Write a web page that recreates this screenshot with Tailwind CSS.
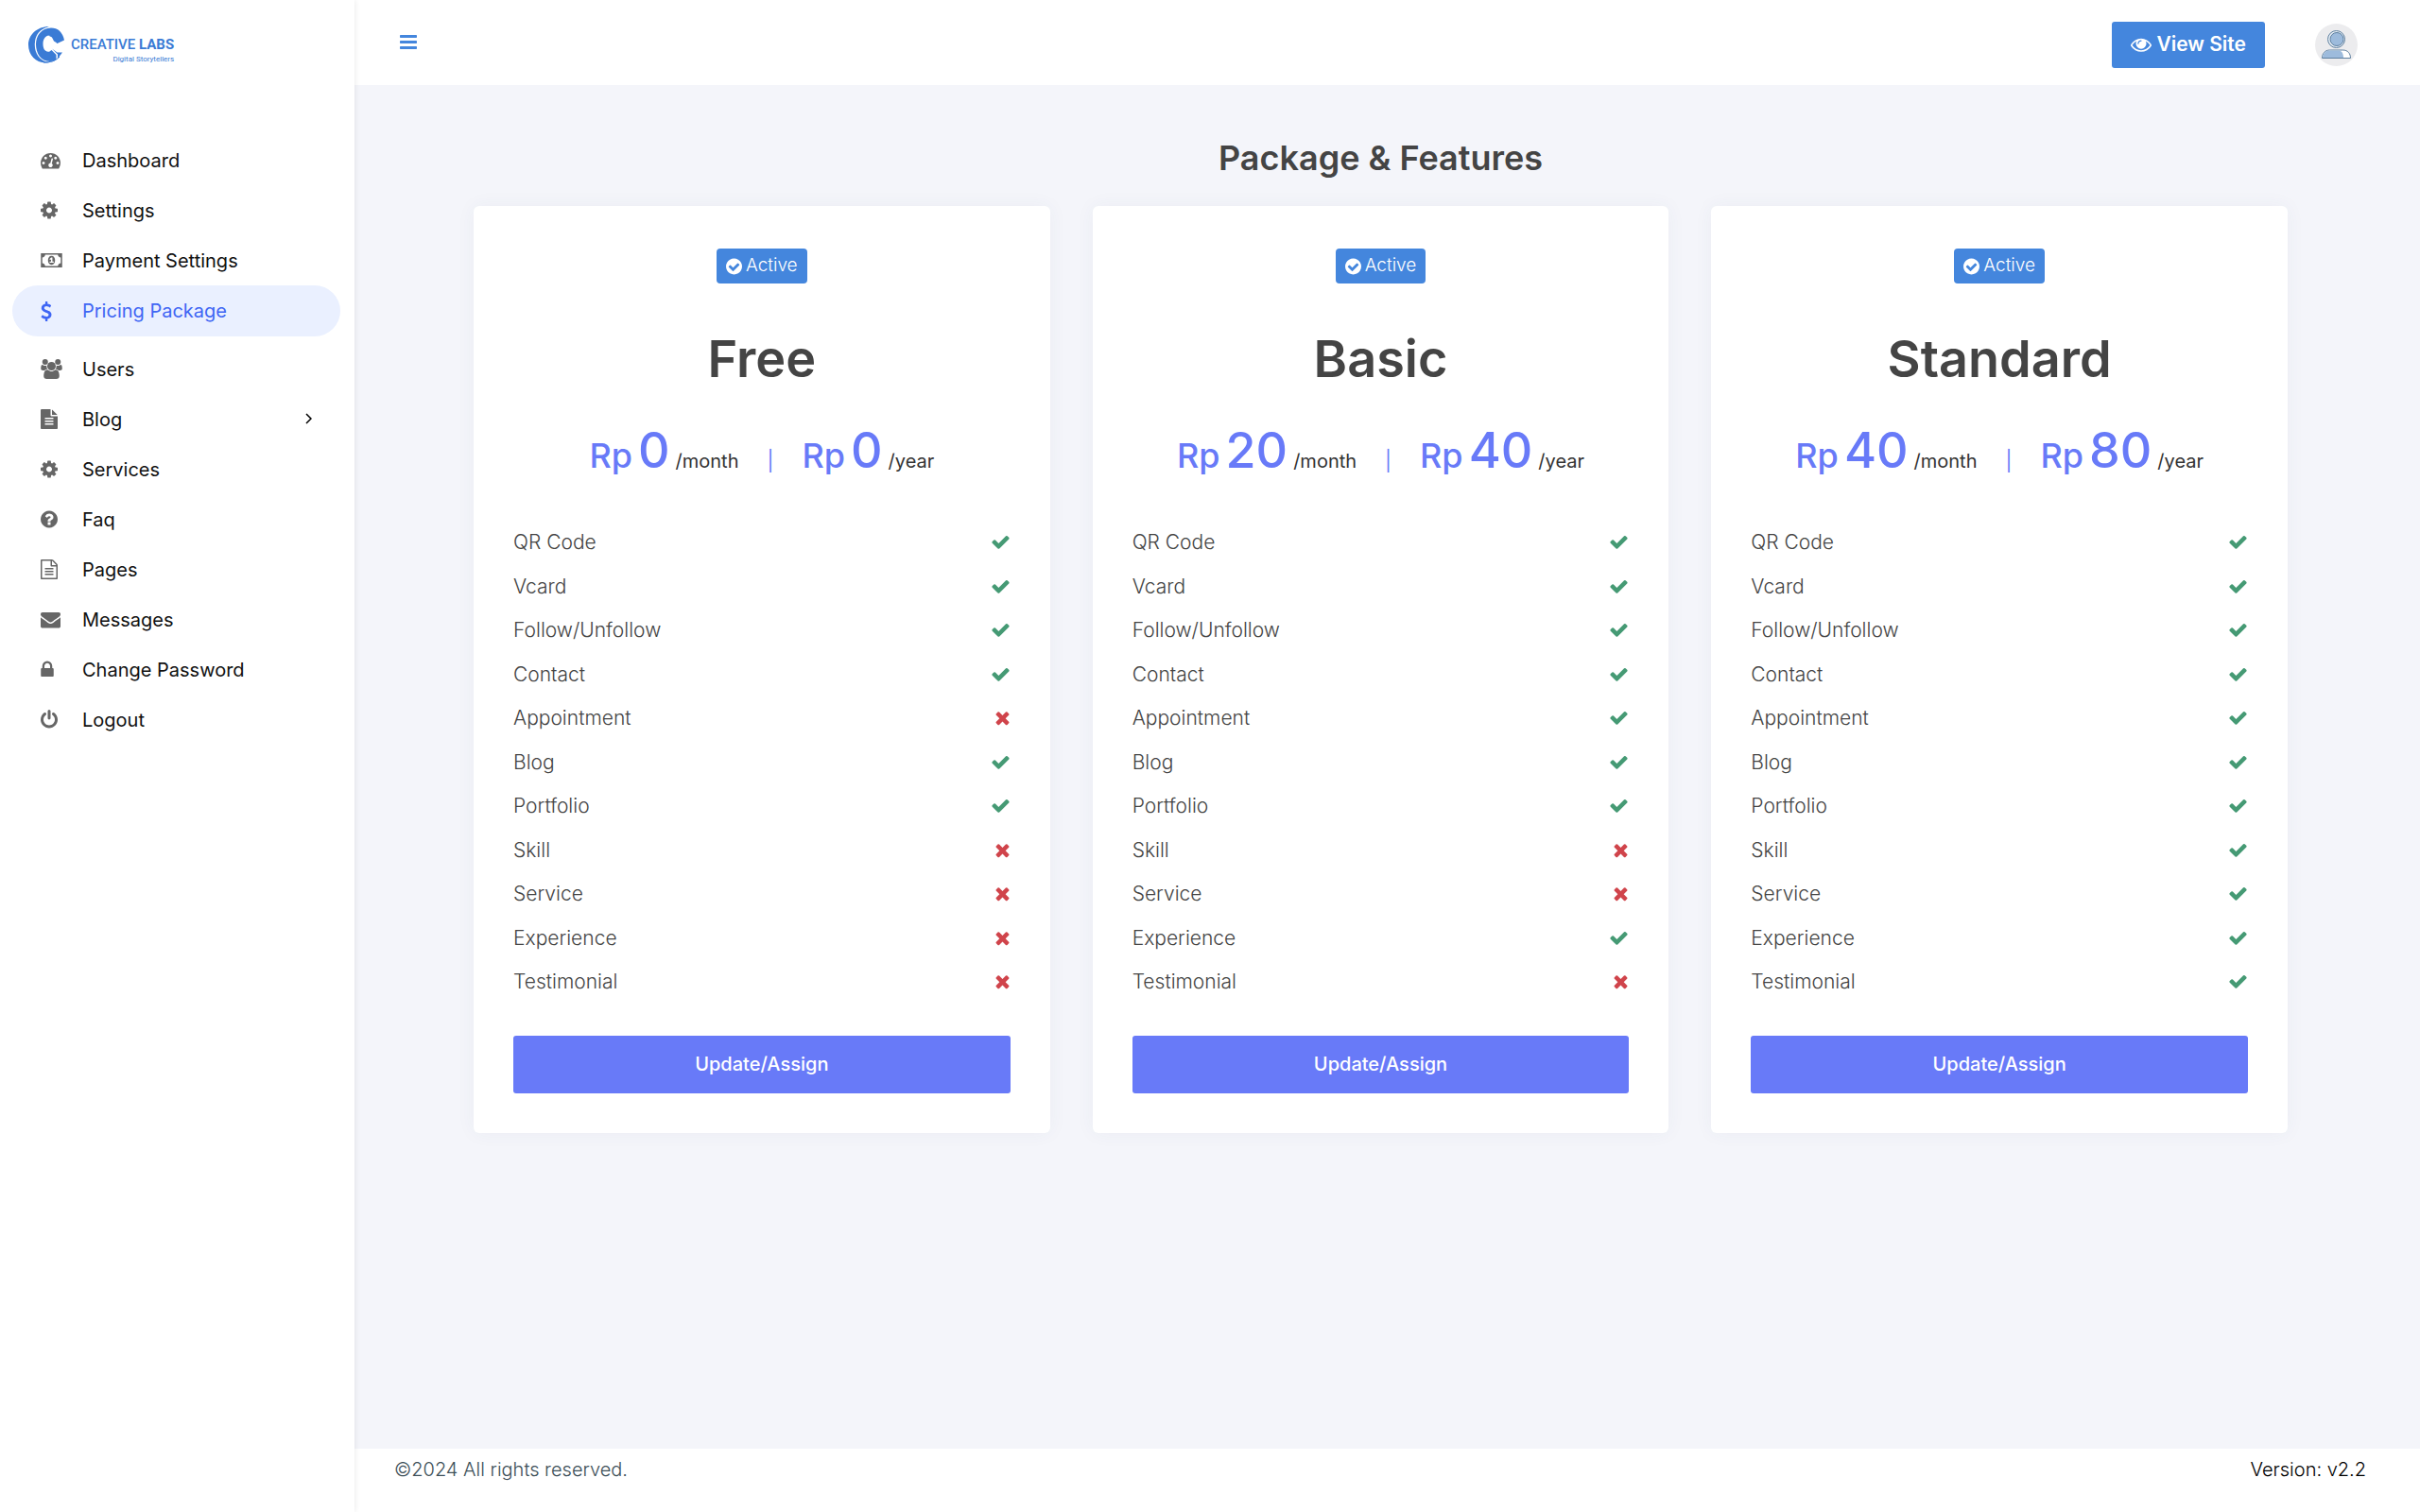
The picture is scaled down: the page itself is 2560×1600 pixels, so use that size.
<!DOCTYPE html>
<html lang="en">

<head>
    <meta charset="UTF-8">
    <meta name="viewport" content="width=device-width, initial-scale=1.0">
    <script src="https://cdn.jsdelivr.net/npm/@tailwindcss/browser@4"></script>
    <title>Package &amp; Features</title>
</head>

<body class="bg-[#f4f5fa] font-['Inter','Open_Sans',sans-serif] text-[21px] leading-normal text-[#444]">
    <!-- Icons -->
    <svg class="hidden" xmlns="http://www.w3.org/2000/svg">
        <symbol id="i-dashboard" viewBox="0 0 1792 1792"><path d="M384 1152q0-53-37.5-90.5t-90.5-37.5-90.5 37.5-37.5 90.5 37.5 90.5 90.5 37.5 90.5-37.5 37.5-90.5zm192-448q0-53-37.5-90.5t-90.5-37.5-90.5 37.5-37.5 90.5 37.5 90.5 90.5 37.5 90.5-37.5 37.5-90.5zm428 481l101-382q6-26-7.5-48.5t-38.5-29.5-48 6.5-30 39.5l-101 382q-60 5-107 43.5t-63 98.5q-20 77 20 146t117 89 146-20 89-117q16-60-6-117t-72-91zm660-33q0-53-37.5-90.5t-90.5-37.5-90.5 37.5-37.5 90.5 37.5 90.5 90.5 37.5 90.5-37.5 37.5-90.5zm-640-640q0-53-37.5-90.5t-90.5-37.5-90.5 37.5-37.5 90.5 37.5 90.5 90.5 37.5 90.5-37.5 37.5-90.5zm448 192q0-53-37.5-90.5t-90.5-37.5-90.5 37.5-37.5 90.5 37.5 90.5 90.5 37.5 90.5-37.5 37.5-90.5zm320 448q0 261-141 483-19 29-54 29h-1402q-35 0-54-29-141-221-141-483 0-182 71-348t191-286 286-191 348-71 348 71 286 191 191 286 71 348z"/></symbol>
        <symbol id="i-cog" viewBox="128 0 1536 1792"><path d="M1152 896q0-106-75-181t-181-75-181 75-75 181 75 181 181 75 181-75 75-181zm512-109v222q0 12-8 23t-20 13l-185 28q-19 54-39 91 35 50 107 138 10 12 10 25t-9 23q-27 37-99 108t-94 71q-12 0-26-9l-138-108q-44 23-91 38-16 136-29 186-7 28-36 28h-222q-14 0-24.5-8.5t-11.5-21.5l-28-184q-49-16-90-37l-141 107q-10 9-25 9-14 0-25-11-126-114-165-168-7-10-7-23 0-12 8-23 15-21 51-66.5t54-70.5q-27-50-41-99l-183-27q-13-2-21-12.5t-8-23.5v-222q0-12 8-23t19-13l186-28q14-46 39-92-40-57-107-138-10-12-10-24 0-10 9-23 26-36 98.5-107.5t94.5-71.5q13 0 26 10l138 107q44-23 91-38 16-136 29-186 7-28 36-28h222q14 0 24.5 8.5t11.5 21.5l28 184q49 16 90 37l142-107q9-9 24-9 13 0 25 10 129 119 165 170 7 8 7 22 0 12-8 23-15 21-51 66.5t-54 70.5q26 50 41 98l183 28q13 2 21 12.5t8 23.5z"/></symbol>
        <symbol id="i-money" viewBox="0 0 1920 1792"><path fill-rule="evenodd" d="M0 256h1920v1280H0zM384 384q0 106-75 181t-181 75v512q106 0 181 75t75 181h1152q0-106 75-181t181-75V640q-106 0-181-75t-75-181zM960 500q160 0 240 120t80 276-80 276-240 120-240-120-80-276 80-276 240-120zM930 640L770 780l70 80 80-60v210h-130v100h370v-100h-120V640z"/></symbol>
        <symbol id="i-dollar" viewBox="384 0 1024 1792"><path d="M1362 1185q0 153-99.5 263.5t-258.5 136.5v175q0 14-9 23t-23 9h-135q-13 0-22.5-9.5t-9.5-22.5v-175q-66-9-127.5-31t-101.5-44.5-74-48-46.5-37.5-17.5-18q-17-21-2-41l103-135q7-10 23-12 15-2 24 9l2 2q113 99 243 125 37 8 74 8 81 0 142.5-43t61.5-122q0-28-15-53t-33.5-42-58.5-37.5-66-32-80-32.5q-39-16-61.5-25t-61.5-26.5-62.5-31-56.5-35.5-53.5-42.5-43.5-49-35.5-58-21-66.5-8.5-78q0-138 98-242t255-134v-180q0-13 9.5-22.5t22.5-9.5h135q14 0 23 9t9 23v176q57 6 110.5 23t87 33.5 63.5 37.5 39 29 15 14q17 18 5 38l-81 146q-8 15-23 16-14 3-27-7-3-3-14.5-12t-39-26.5-58.5-32-74.5-26-85.5-11.5q-95 0-155 43t-60 111q0 26 8.5 48t29.5 41.5 39.5 33 56 31 60.5 27 70 27.5q53 20 81 31.5t76 35 75.5 42.5 62 50 53 63.5 31.5 76.5 13 94z"/></symbol>
        <symbol id="i-users" viewBox="0 0 1920 1792"><circle cx="384" cy="256" r="256"/><circle cx="1536" cy="256" r="256"/><circle cx="960" cy="640" r="384"/><path d="M593 896q-162 5-265 128H194q-82 0-138-40.500T0 865q0-353 124-353 6 0 43.500 21t97.500 42.500 119 21.500q67 0 133-23-5 37-5 66 0 139 81 256zM1664 1533q0 120-73 189.500t-194 69.500H523q-121 0-194-69.500T256 1533q0-53 3.500-103.500t14-109T300 1212t43-97.500 62-81 85.500-53.500T602 960q10 0 43 21.500t73 48 107 48T960 1099t135-21.500 107-48 73-48 43-21.500q61 0 111.500 20t85.500 53.500 62 81 43 97.500 26.500 108.500 14 109 3.500 103.500zM1920 865q0 78-56 118.500t-138 40.500h-134q-103-123-265-128 81-117 81-256 0-29-5-66 66 23 133 23 59 0 119-21.500t97.500-42.500 43.500-21q124 0 124 353z"/></symbol>
        <symbol id="i-file" viewBox="128 0 1536 1792"><path d="M1596 476q14 14 28 36h-472v-472q22 14 36 28zm-476 164h544v1056q0 40-28 68t-68 28h-1344q-40 0-68-28t-28-68v-1600q0-40 28-68t68-28h800v544q0 40 28 68t68 28zm160 736v-64q0-14-9-23t-23-9h-704q-14 0-23 9t-9 23v64q0 14 9 23t23 9h704q14 0 23-9t9-23zm0-256v-64q0-14-9-23t-23-9h-704q-14 0-23 9t-9 23v64q0 14 9 23t23 9h704q14 0 23-9t9-23zm0-256v-64q0-14-9-23t-23-9h-704q-14 0-23 9t-9 23v64q0 14 9 23t23 9h704q14 0 23-9t9-23z"/></symbol>
        <symbol id="i-question" viewBox="128 0 1536 1792"><path d="M1024 1376v-192q0-14-9-23t-23-9h-192q-14 0-23 9t-9 23v192q0 14 9 23t23 9h192q14 0 23-9t9-23zm256-672q0-88-55.5-163t-138.5-116-170-41q-243 0-371 213-15 24 8 42l132 100q7 6 19 6 16 0 25-12 53-68 86-92 34-24 86-24 48 0 85.5 26t37.5 59q0 38-20 61t-68 45q-63 28-115.5 86.5t-52.5 125.5v36q0 14 9 23t23 9h192q14 0 23-9t9-23q0-19 21.5-49.5t54.5-49.5q32-18 49-28.5t46-35 44.5-48 28-60.5 12.5-81zm384 192q0 209-103 385.5t-279.5 279.5-385.500 103-385.500-103-279.500-279.500-103-385.500 103-385.500 279.500-279.500 385.500-103 385.500 103 279.500 279.500 103 385.500z"/></symbol>
        <symbol id="i-file-o" viewBox="128 0 1536 1792"><path d="M1596 380q28 28 48 76t20 88v1152q0 40-28 68t-68 28h-1344q-40 0-68-28t-28-68v-1600q0-40 28-68t68-28h896q40 0 88 20t76 48zm-444-244v376h376q-10-29-22-41l-313-313q-12-12-41-22zm384 1528v-1024h-416q-40 0-68-28t-28-68v-416h-768v1536h1280zm-1024-864q0-14 9-23t23-9h704q14 0 23 9t9 23v64q0 14-9 23t-23 9h-704q-14 0-23-9t-9-23v-64zm736 224q14 0 23 9t9 23v64q0 14-9 23t-23 9h-704q-14 0-23-9t-9-23v-64q0-14 9-23t23-9h704zm0 256q14 0 23 9t9 23v64q0 14-9 23t-23 9h-704q-14 0-23-9t-9-23v-64q0-14 9-23t23-9h704z"/></symbol>
        <symbol id="i-envelope" viewBox="0 0 1792 1792"><path d="M1792 710v794q0 66-47 113t-113 47h-1472q-66 0-113-47t-47-113v-794q44 49 101 87 362 246 497 345 57 42 92.5 65.5t94.5 48 110 24.5h2q51 0 110-24.5t94.5-48 92.5-65.5q170-123 498-345 57-39 100-87zm0-294q0 79-49 151t-122 123q-376 261-468 325-10 7-42.5 31t-54 38.5-52 32.5-57.5 27-50 9h-2q-23 0-50-9t-57.5-27-52-32.5-54-38.5-42.5-31q-91-64-262-182.5t-205-142.5q-62-42-117-115.5t-55-136.5q0-78 41.5-130t118.5-52h1472q65 0 112.5 47t47.5 113z"/></symbol>
        <symbol id="i-lock" viewBox="320 0 1152 1792"><path d="M640 768h512v-192q0-106-75-181t-181-75-181 75-75 181v192zm832 96v576q0 40-28 68t-68 28h-960q-40 0-68-28t-28-68v-576q0-40 28-68t68-28h32v-192q0-184 132-316t316-132 316 132 132 316v192h32q40 0 68 28t28 68z"/></symbol>
        <symbol id="i-power" viewBox="128 0 1536 1792"><path d="M1664 896q0 156-61 298t-164 245-245 164-298 61-298-61-245-164-164-245-61-298q0-182 80.5-343t226.5-270q43-32 95.5-25t83.5 50q32 42 24.5 94.5t-49.5 84.5q-98 74-151.5 181t-53.5 228q0 104 40.5 198.5t109.5 163.5 163.5 109.5 198.5 40.5 198.5-40.5 163.5-109.5 109.5-163.5 40.5-198.5q0-121-53.5-228t-151.5-181q-42-32-49.5-84.5t24.5-94.5q31-43 84-50t95 25q146 109 226.5 270t80.5 343zm-640-768v640q0 52-38 90t-90 38-90-38-38-90v-640q0-52 38-90t90-38 90 38 38 90z"/></symbol>
        <symbol id="i-bars" viewBox="128 0 1536 1792"><path d="M192 256h1408q64 0 64 64v128q0 64-64 64H192q-64 0-64-64V320q0-64 64-64zM192 768h1408q64 0 64 64v128q0 64-64 64H192q-64 0-64-64V832q0-64 64-64zM192 1280h1408q64 0 64 64v128q0 64-64 64H192q-64 0-64-64v-128q0-64 64-64z"/></symbol>
        <symbol id="i-eye" viewBox="0 0 1792 1792"><path d="M1664 960q-152-236-381-353 61 104 61 225 0 185-131.5 316.5t-316.5 131.5-316.5-131.5-131.5-316.5q0-121 61-225-229 117-381 353 133 205 333.5 326.5t434.5 121.5 434.5-121.5 333.5-326.5zm-720-384q0-20-14-34t-34-14q-125 0-214.5 89.5t-89.5 214.5q0 20 14 34t34 14 34-14 14-34q0-86 61-147t147-61q20 0 34-14t14-34zm848 384q0 34-20 69-140 230-376.5 368.5t-499.5 138.5-499.5-139-376.5-368q-20-35-20-69t20-69q140-229 376.5-368t499.5-139 499.5 139 376.5 368q20 35 20 69z"/></symbol>
        <symbol id="i-active" viewBox="128 0 1536 1792"><path d="M1412 734q0-28-18-46l-91-90q-19-19-45-19t-45 19l-408 407-226-226q-19-19-45-19t-45 19l-91 90q-18 18-18 46 0 27 18 45l362 362q19 19 45 19 27 0 46-19l543-543q18-18 18-45zm252 162q0 209-103 385.5t-279.5 279.5-385.500 103-385.500-103-279.500-279.500-103-385.500 103-385.500 279.500-279.500 385.500-103 385.500 103 279.500 279.500 103 385.500z"/></symbol>
        <symbol id="i-check" viewBox="0 0 1792 1792"><path d="M1671 566q0 40-28 68l-724 724-136 136q-28 28-68 28t-68-28l-136-136-362-362q-28-28-28-68t28-68l136-136q28-28 68-28t68 28l294 295 656-657q28-28 68-28t68 28l136 136q28 28 28 68z"/></symbol>
        <symbol id="i-times" viewBox="192 0 1408 1792"><path d="M1490 1322q0 40-28 68l-136 136q-28 28-68 28t-68-28l-294-294-294 294q-28 28-68 28t-68-28l-136-136q-28-28-28-68t28-68l294-294-294-294q-28-28-28-68t28-68l136-136q28-28 68-28t68 28l294 294 294-294q28-28 68-28t68 28l136 136q28 28 28 68t-28 68l-294 294 294 294q28 28 28 68z"/></symbol>
    </svg>

    <div class="flex min-h-screen">
        <!-- Sidebar -->
        <aside class="relative z-10 w-[375px] shrink-0 bg-white shadow-[0_0_6px_rgba(0,0,0,0.1)]">
            <a href="#" class="flex h-[90px] items-center gap-[6px] pt-1 pl-[30px] text-[#3a7bd5]">
                <svg class="h-[39px] w-[39px]" viewBox="0 0 39 39" fill="currentColor">
                    <path d="M22 0C9 0 0 9 0 19.500S8 38.500 18 38.500c6 0 11-2 15.500-6.500L24 33C14 33 8 27 8 19S13 3 22 0z"/>
                    <path d="M34.500 14.500C33 8.500 28.500 5.500 23.500 5.500c-8 0-12 6-12 13.500s4 14 11.500 14c4 0 6.500-1.500 9-5" fill="none" stroke="#fff" stroke-width="9.500"/>
                    <path d="M38 14.500C36.500 6 31 1.500 24 1.500 13.500 1.500 8 10 8 19s5 18 15 18c3.500 0 5.500-1 6.500-2v-5l-5-5-2 1.500c-4.500 1-7-2.500-7-8 0-7 5-11 9-8l6 7.500z"/>
                    <path d="M21 9.500l5-.5 3 6.500 2 2.500-4-2.500-2-4z"/>
                    <path d="M25 23.500l5.500 4h5.500l-5 6.500v-4.500z"/>
                    <path d="M16 38c7 0 12-1 17-6" fill="none" stroke="currentColor"/>
                </svg>
                <span class="mt-3 flex flex-col items-end font-['Roboto',sans-serif]">
                    <span class="text-[15px] leading-5 font-medium">CREATIVE <b>LABS</b></span>
                    <span class="text-[8px] leading-3">Digital Storytellers</span>
                </span>
            </a>
            <nav class="mt-[53px] pr-[15px] pl-[13px] text-[20px]">
                <ul id="menu"></ul>
            </nav>
        </aside>

        <div class="flex min-w-0 flex-1 flex-col">
            <!-- Header -->
            <header class="flex h-[90px] items-center bg-white pr-[66px] pl-12">
                <button type="button" aria-label="Toggle menu" class="pb-[2px] text-[#4486dd]">
                    <svg class="h-[21px] w-[18px] fill-current"><use href="#i-bars"/></svg>
                </button>
                <a href="#" class="mt-1 ml-auto flex h-[49px] items-center gap-[5px] rounded-[3px] bg-[#4486dd] px-5 font-semibold text-white">
                    <svg class="size-[22px] fill-current"><use href="#i-eye"/></svg>
                    View Site
                </a>
                <button type="button" aria-label="Account" class="mt-1 ml-[53px] rounded-full bg-[#ececee]">
                    <svg class="size-[45px]" viewBox="0 0 45 45" stroke="#5d7f9f">
                        <circle cx="22.500" cy="16.500" r="9" fill="#e8eff6"/>
                        <circle cx="23" cy="16.500" r="7" fill="#9dbbdc"/>
                        <path d="M7.500 36.500c0-5 3-8.500 8-8.500h14c5 0 8 3.500 8 8.500z" fill="#fff"/>
                        <path d="M8 36c0-4.500 3-7.500 7.500-7.500H25c3 0 5 3 5 7.500z" fill="#9dbbdc" stroke="none"/>
                    </svg>
                </button>
            </header>

            <!-- Packages -->
            <main class="flex-1 pt-[50px] pr-[140px] pb-20 pl-[126px]">
                <h1 class="text-center text-[36px] leading-[54px] font-semibold">Package &amp; Features</h1>
                <div id="packages" class="mt-6 grid grid-cols-3 gap-[45px]"></div>
            </main>

            <!-- Footer -->
            <footer class="flex h-[67px] justify-between bg-white pt-[7px] pr-[57px] pl-[42px] text-[20px] font-light">
                <p class="text-[#3d4f58]">©2024 All rights reserved.</p>
                <p class="text-black">Version: v2.2</p>
            </footer>
        </div>
    </div>

    <script>
        var menu = [
            ['Dashboard', 'dashboard', 21],
            ['Settings', 'cog', 18],
            ['Payment Settings', 'money', 23],
            ['Pricing Package', 'dollar', 12],
            ['Users', 'users', 23],
            ['Blog', 'file', 18],
            ['Services', 'cog', 18],
            ['Faq', 'question', 18],
            ['Pages', 'file-o', 18],
            ['Messages', 'envelope', 21],
            ['Change Password', 'lock', 14],
            ['Logout', 'power', 18]
        ];
        var features = ['QR Code', 'Vcard', 'Follow/Unfollow', 'Contact', 'Appointment', 'Blog', 'Portfolio', 'Skill', 'Service', 'Experience', 'Testimonial'];
        var packages = [
            { name: 'Free', month: 0, year: 0, missing: ['Appointment', 'Skill', 'Service', 'Experience', 'Testimonial'] },
            { name: 'Basic', month: 20, year: 40, missing: ['Skill', 'Service', 'Testimonial'] },
            { name: 'Standard', month: 40, year: 80, missing: [] }
        ];

        document.getElementById('menu').innerHTML = menu.map(function (item) {
            var active = item[0] === 'Pricing Package';
            var arrow = item[0] === 'Blog'
                ? '<svg class="mr-[30px] mb-[2px] ml-auto h-3 w-[7px] fill-none stroke-black" viewBox="0 0 7 12"><path d="M1 1l5 5-5 5" stroke-width="1.5"/></svg>'
                : '';
            return '<li><a href="#" class="' + (active ? 'mb-2 flex h-[54px] items-center rounded-full bg-[#eaf0ff] pl-[30px] text-[#3f66f4]' : 'flex h-[53px] items-center pl-[30px] text-[#111]') + '">' +
                '<span class="w-[44px]"><svg class="' + (active ? 'h-[21px] fill-current' : 'h-[21px] fill-[#666]') + '" style="width:' + item[2] + 'px"><use href="#i-' + item[1] + '"/></svg></span>' +
                '<span>' + item[0] + '</span>' + arrow + '</a></li>';
        }).join('');

        function price(amount, unit) {
            return '<p class="flex items-baseline text-[36px] font-medium text-[#687af8]">Rp <span class="ml-[6px] text-[52px] leading-[60px]">' + amount + '</span>' +
                '<span class="ml-[6px] text-[20px] font-normal text-[#333]">/' + unit + '</span></p>';
        }

        document.getElementById('packages').innerHTML = packages.map(function (p) {
            var rows = features.map(function (f) {
                var icon = p.missing.indexOf(f) < 0
                    ? '<svg class="size-[21px] fill-[#459a74]" role="img" aria-label="Included"><use href="#i-check"/></svg>'
                    : '<svg class="h-[21px] w-[17px] fill-[#d0444b]" role="img" aria-label="Not included"><use href="#i-times"/></svg>';
                return '<li class="mb-[15px] flex items-center justify-between">' + f + icon + '</li>';
            }).join('');
            return '<section class="flex flex-col rounded-md bg-white px-[42px] pt-[45px] pb-[42px] shadow-[0_0_20px_rgba(60,70,120,0.05)]">' +
                '<span class="mx-auto flex h-[37px] items-center gap-1 rounded bg-[#4486dd] px-[10px] text-[19px] font-light text-white"><svg class="h-[20px] w-[17px] fill-current"><use href="#i-active"/></svg>Active</span>' +
                '<h2 class="mt-10 text-center text-[54px] leading-[80px] font-semibold">' + p.name + '</h2>' +
                '<div class="mt-[27px] flex items-baseline justify-center">' + price(p.month, 'month') + '<span class="mx-[30px] text-[#687af8]">|</span>' + price(p.year, 'year') + '</div>' +
                '<ul class="mt-[49px] font-light">' + rows + '</ul>' +
                '<button type="button" class="mt-[26px] h-[61px] rounded-[3px] bg-[#687af8] text-[20px] font-medium text-white">Update/Assign</button>' +
                '</section>';
        }).join('');
    </script>
</body>

</html>
